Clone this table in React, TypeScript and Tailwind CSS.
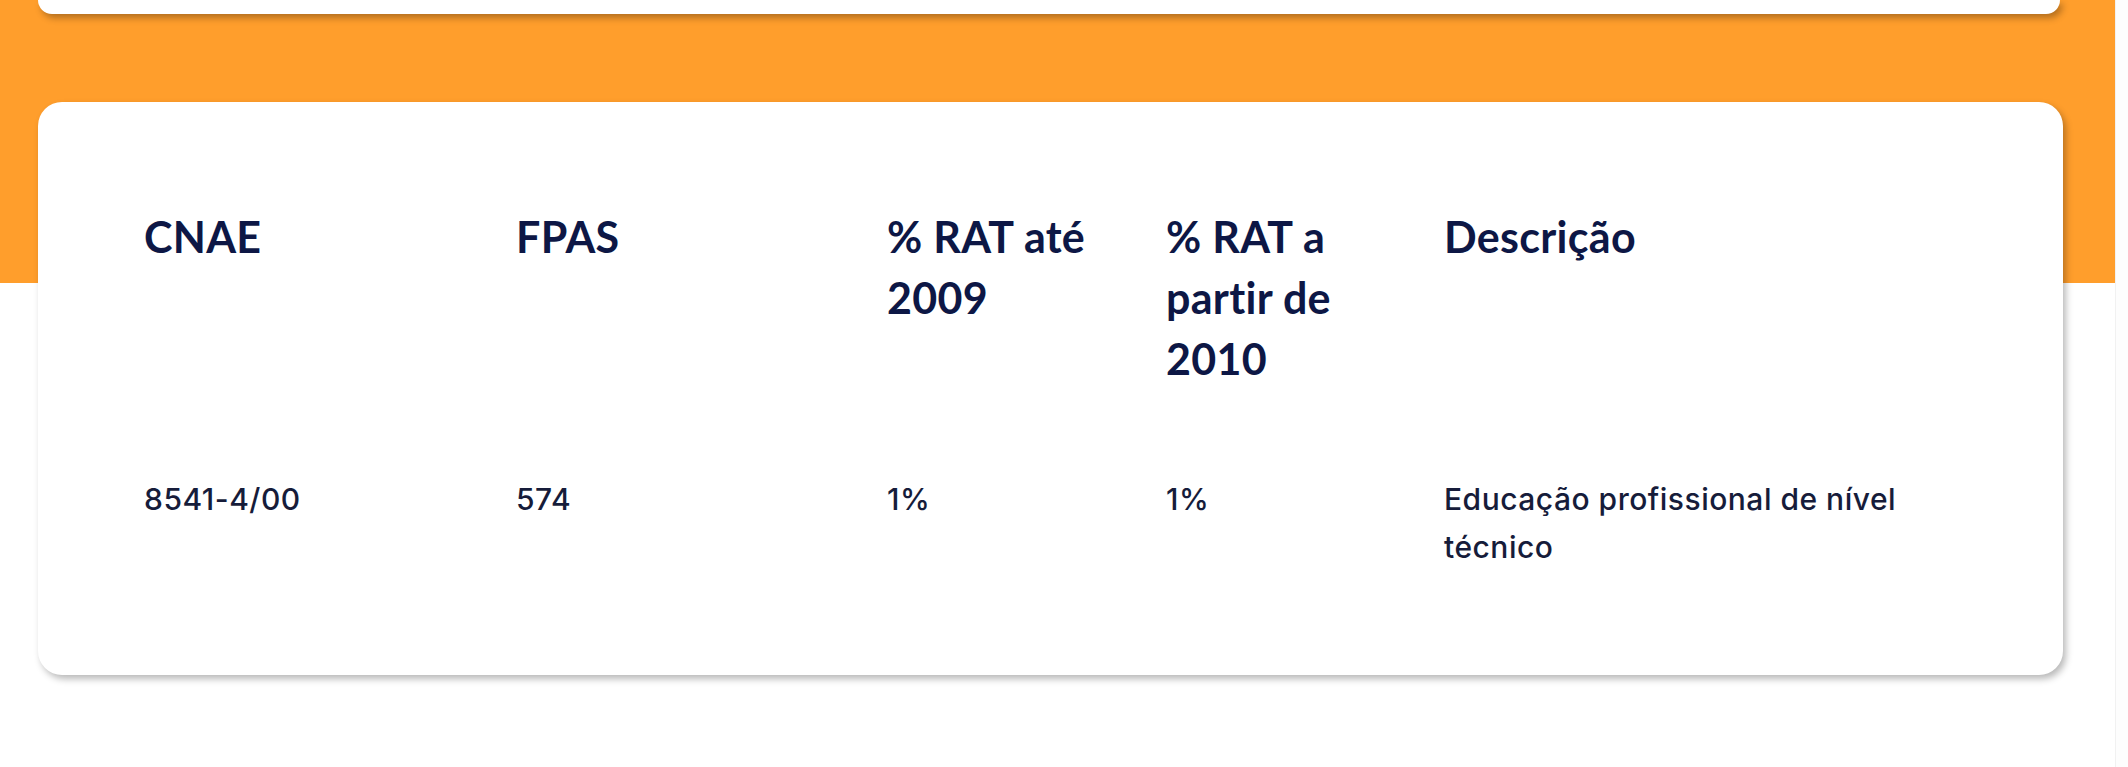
import React from "react";

const headers: string[][] = [
  ["CNAE"],
  ["FPAS"],
  ["% RAT até", "2009"],
  ["% RAT a", "partir de", "2010"],
  ["Descrição"],
];

const row = ["8541-4/00", "574", "1%", "1%", "Educação profissional de nível técnico"];

const App: React.FC = () => {
  return (
    <div className="flex w-[2128px] min-h-[767px] bg-white font-['Lato',sans-serif]">
      <div className="w-[2115px] min-h-[767px] bg-[linear-gradient(to_bottom,#ff9e2c_283px,#ffffff_283px)]">
        {/* previous card, only its bottom edge is on screen */}
        <div className="ml-[38px] w-[2022px] h-[14px] bg-white rounded-b-3xl shadow-[3px_4px_7px_rgba(0,0,0,0.3)]" />

        <div className="ml-[38px] mt-[88px] w-[2025px] bg-white rounded-3xl shadow-[3px_4px_7px_rgba(0,0,0,0.28)] pl-[106px] pr-[106px] pt-[104px] pb-[104px]">
          <div className="grid grid-cols-[372px_371px_279px_278px_1fr] text-[#0d1745]">
            {headers.map((lines, i) => (
              <div key={i} className="text-[43px] leading-[61px] font-bold tracking-[0.3px]">
                {lines.map((l, j) => (
                  <div key={j}>{l}</div>
                ))}
              </div>
            ))}
          </div>

          <div className="grid grid-cols-[372px_371px_279px_278px_1fr] mt-[86px] text-[#161c3a] font-['Inter',sans-serif]">
            {row.map((cell, i) => (
              <div key={i} className="text-[30px] leading-[48px] font-medium tracking-[0.5px] pr-[40px]">
                {cell}
              </div>
            ))}
          </div>
        </div>
      </div>
      <div className="flex-1 bg-[#fdfdfd] border-l border-[#f1f1f1]" />
    </div>
  );
};

export default App;
